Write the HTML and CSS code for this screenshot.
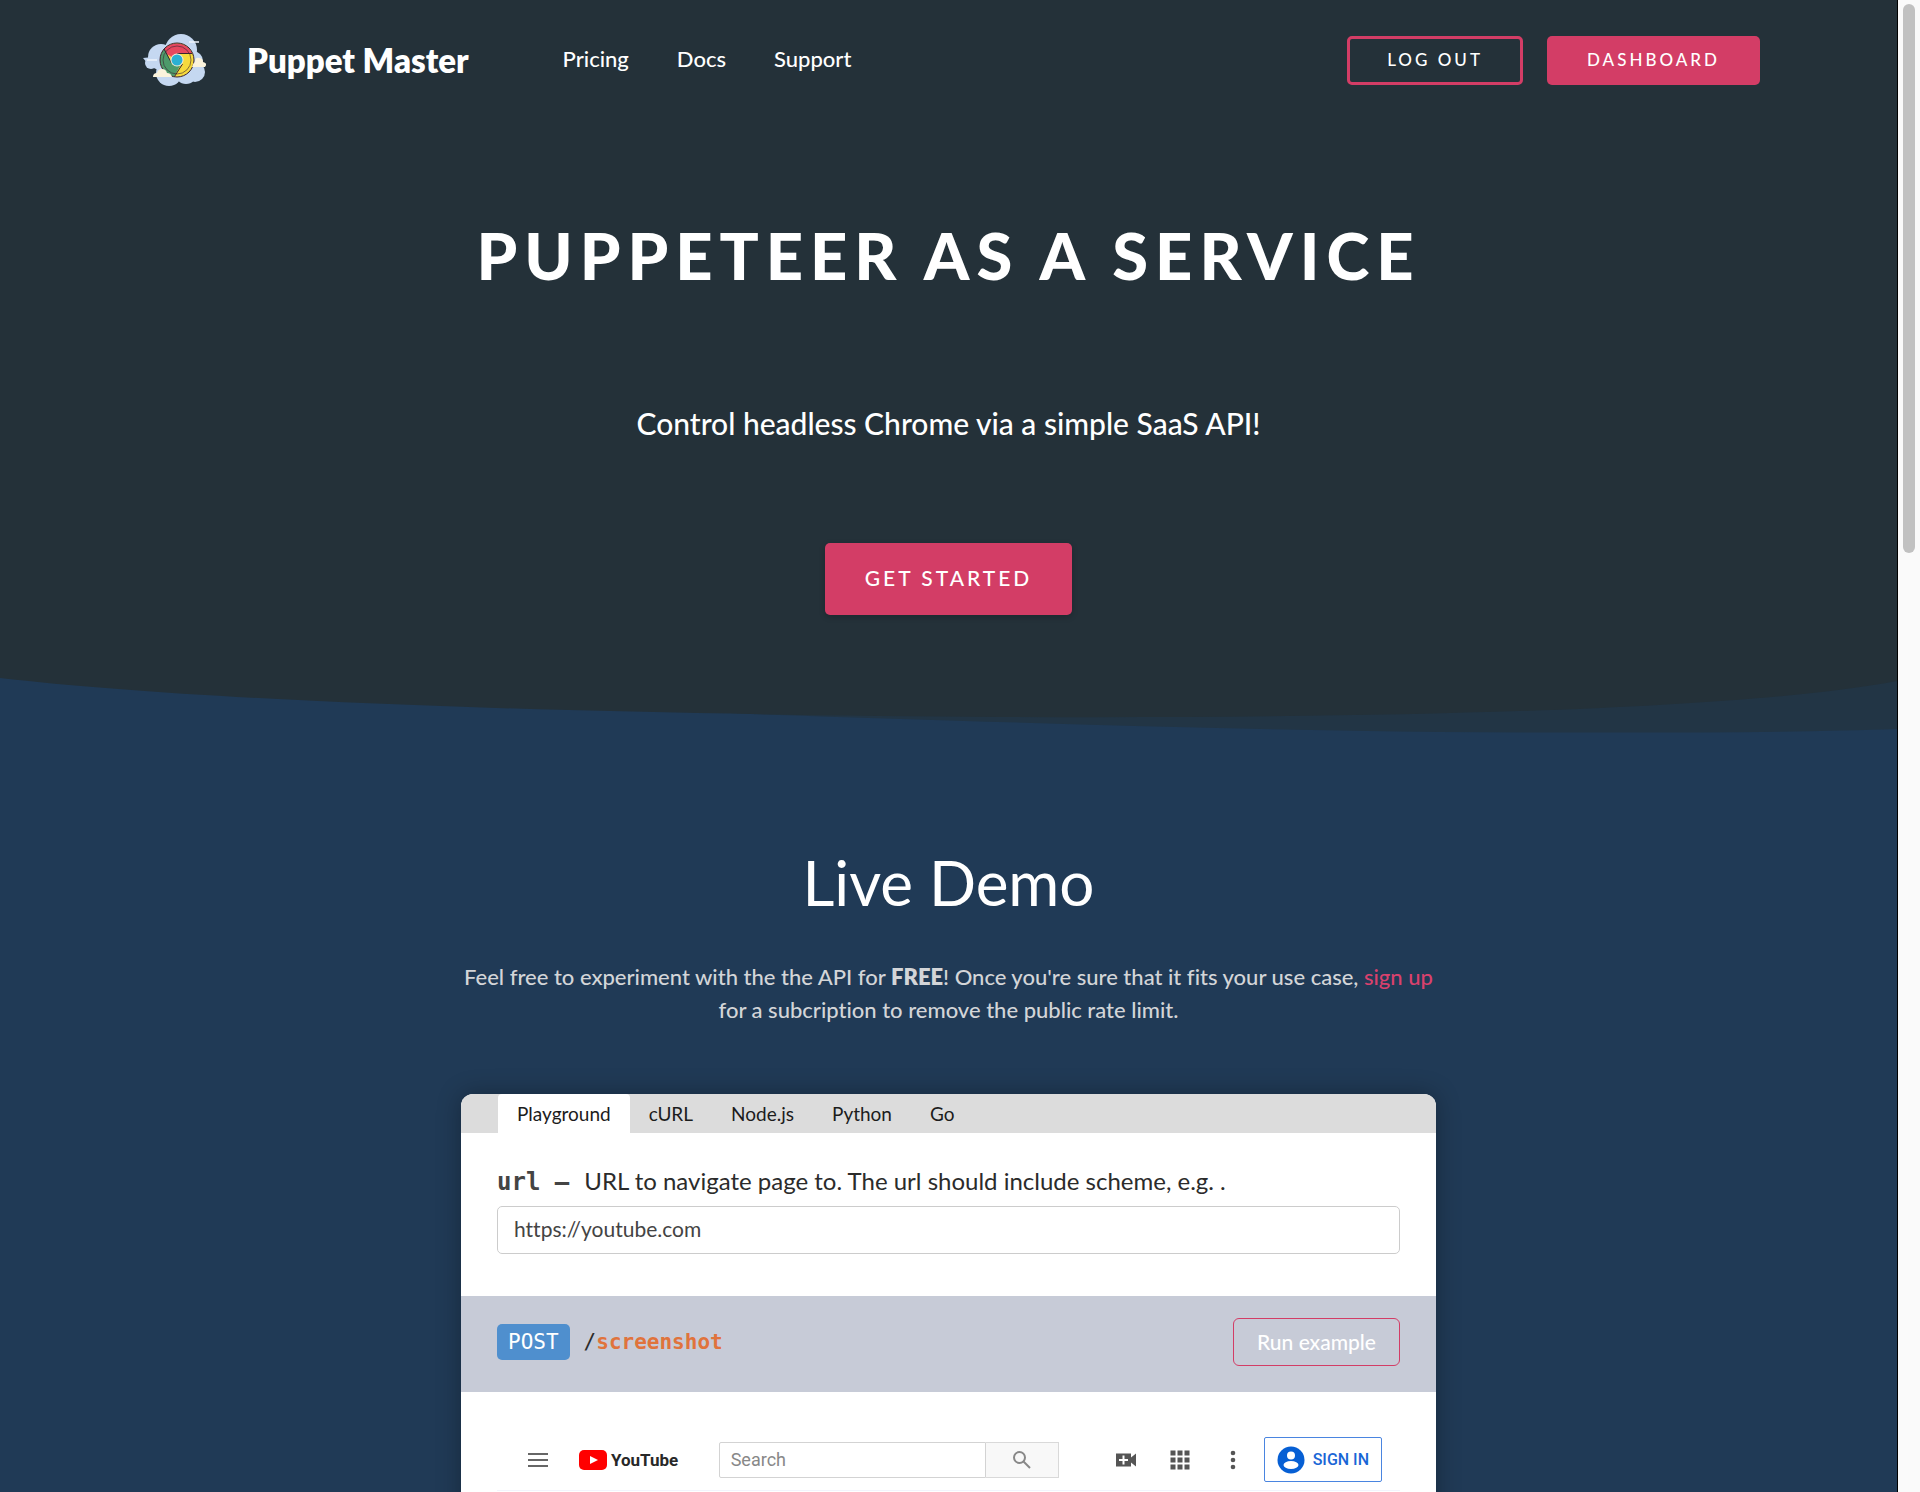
FILE: index.html
```html
<!DOCTYPE html>
<html lang="en">
<head>
<meta charset="utf-8">
<meta name="viewport" content="width=device-width, initial-scale=1">
<title>Puppet Master</title>
<link rel="stylesheet" href="styles.css">
</head>
<body>
<div class="page">
  <div class="hero">
    <header class="header">
      <a class="brand" href="#">
        <svg class="brand-logo" viewBox="0 0 76 64" aria-hidden="true">
          <g fill="#c5d8f1">
            <circle cx="44" cy="22" r="16"/><circle cx="24" cy="29" r="13"/><circle cx="56" cy="33" r="10"/>
            <circle cx="32" cy="45" r="13"/><circle cx="58" cy="44" r="10"/><circle cx="49" cy="45" r="11"/><circle cx="14" cy="35" r="6"/>
            <path d="M6 30l10-1-4 8z"/>
          </g>
          <path d="M52 14h10M10 32h10" stroke="#eef4fc" stroke-width="1.5" fill="none"/>
          <circle cx="40" cy="32" r="17" fill="#f6da3c"/>
          <path d="M40 32L25.300 23.500A17 17 0 0 1 55.500 26H40z" fill="#e6485f"/>
          <path d="M27.500 20.500A17 17 0 0 0 37 48.700L43 38 34 34z" fill="#4d9a6a"/>
          <g fill="none" stroke="#3a2430">
            <circle cx="40" cy="32" r="17"/><circle cx="40" cy="32" r="14" stroke-width=".6"/>
            <path d="M40 25.500h15M34.500 35l-7.500-14M45.500 36l-8 12.500"/>
          </g>
          <circle cx="40" cy="32" r="6.500" fill="#f4ead6"/><circle cx="40" cy="32" r="5.500" fill="#2bb0d3"/>
          <path d="M16 49q0-4 4-4 1-4 5-4 4 0 5 4 4 0 5 4zM55 39q1-4 3-5 0-5 4-4 4 0 4 4 5 1 2 5z" fill="#fbf3dc"/>
        </svg>
        <span>Puppet Master</span>
      </a>
      <nav class="nav">
        <a href="#">Pricing</a>
        <a href="#">Docs</a>
        <a href="#">Support</a>
      </nav>
      <div class="actions">
        <button class="btn btn-outline" type="button">LOG OUT</button>
        <button class="btn" type="button">DASHBOARD</button>
      </div>
    </header>
    <section class="intro">
      <h1>PUPPETEER AS A SERVICE</h1>
      <p>Control headless Chrome via a simple SaaS API!</p>
      <button class="btn btn-large" type="button">GET STARTED</button>
    </section>
    <svg class="curve" viewBox="0 0 1897 60" preserveAspectRatio="none" aria-hidden="true">
      <path d="M0 0H1897V52Q1760 57 1440 55C1200 52 1000 45 750 37L500 24z" fill="#223545"/>
      <path d="M0 0V1C200 24 560 37 1000 40C1400 42 1750 32 1897 4V0z" fill="#243139"/>
    </svg>
  </div>

  <main class="demo">
    <h2>Live Demo</h2>
    <p class="lead">Feel free to experiment with the the API for <b>FREE</b>! Once you're sure that it fits your use case, <a href="#">sign up</a><br>for a subcription to remove the public rate limit.</p>

    <section class="card">
      <div class="tabs" role="tablist">
        <button class="tab tab-active" role="tab" aria-selected="true" type="button">Playground</button>
        <button class="tab" role="tab" type="button">cURL</button>
        <button class="tab" role="tab" type="button">Node.js</button>
        <button class="tab" role="tab" type="button">Python</button>
        <button class="tab" role="tab" type="button">Go</button>
      </div>
      <div class="field">
        <label for="url"><code>url –</code><span>URL to navigate page to. The url should include scheme, e.g. .</span></label>
        <input id="url" type="text" value="https://youtube.com">
      </div>
      <div class="endpoint">
        <code class="method">POST</code>
        <code class="path">/<b>screenshot</b></code>
        <button class="run" type="button">Run example</button>
      </div>
      <div class="shot">
        <div class="yt-bar">
          <button class="icon-btn" type="button" aria-label="Menu">
            <svg width="22" height="20" viewBox="0 0 22 20"><path d="M1 4h20M1 10h20M1 16h20" stroke="#666" stroke-width="2"/></svg>
          </button>
          <a class="yt-logo" href="#">
            <svg width="28" height="22" viewBox="0 0 28 22" aria-hidden="true"><rect x="0" y="1" width="28" height="20" rx="5" fill="#f00"/><path d="M11 7l8 4-8 4z" fill="#fff"/></svg>
            <span>YouTube</span>
          </a>
          <form class="search">
            <input type="text" placeholder="Search" aria-label="Search">
            <button type="button" aria-label="Search">
              <svg width="20" height="20" viewBox="0 0 20 20" fill="none" stroke="#888" stroke-width="2"><circle cx="7.500" cy="7.500" r="5.500"/><path d="M11.500 11.500L18 18"/></svg>
            </button>
          </form>
          <div class="yt-tools">
            <button class="icon-btn" type="button" aria-label="Create">
              <svg width="22" height="20" viewBox="0 0 22 20"><path d="M1 3.500h15v4l5-4v13l-5-4v4H1z" fill="#555"/><path d="M8.500 5.500v9M4 10h9" stroke="#fff" stroke-width="2"/></svg>
            </button>
            <button class="icon-btn" type="button" aria-label="Apps">
              <svg width="20" height="20" viewBox="0 0 20 20" fill="none" stroke="#555" stroke-width="5" stroke-dasharray="5 2"><path d="M.500 3h19M.500 10h19M.500 17h19"/></svg>
            </button>
            <button class="icon-btn" type="button" aria-label="Settings">
              <svg width="20" height="20" viewBox="0 0 20 20" fill="#555"><circle cx="10" cy="3" r="2.300"/><circle cx="10" cy="10" r="2.300"/><circle cx="10" cy="17" r="2.300"/></svg>
            </button>
          </div>
          <button class="signin" type="button">
            <svg width="28" height="28" viewBox="0 0 28 28" aria-hidden="true"><circle cx="14" cy="14" r="13.500" fill="#065fd4"/><circle cx="14" cy="9.500" r="4" fill="#fff"/><ellipse cx="14" cy="19" rx="7.500" ry="4" fill="#fff"/></svg>
            <span>SIGN IN</span>
          </button>
        </div>
      </div>
    </section>
  </main>
</div>
<div class="scroll-track" aria-hidden="true"><div class="scroll-thumb"></div></div>
</body>
</html>
```
FILE: styles.css
```css
* { box-sizing: border-box; }

body {
  margin: 0;
  height: 100vh;
  display: flex;
  overflow: hidden;
  background: #203a56;
  color: #fff;
  font-family: Lato, "Open Sans", sans-serif;
  font-weight: 500;
  font-variant-ligatures: none;
}

a { color: inherit; text-decoration: none; }
button, input { font: inherit; font-variant-ligatures: none; }
button { cursor: pointer; }
svg { display: block; flex: none; }
h1, h2, p { margin: 0; }

.page { flex: 1; min-width: 0; overflow: hidden; }

.scroll-track {
  width: 23px;
  padding: 4px;
  background: #fafafa;
  border-left: 1px solid #000;
}
.scroll-thumb { width: 12px; height: 37%; margin: 0 auto; border-radius: 6px; background: #c1c1c1; }

/* Hero */
.hero { background: #203a56; }
.header {
  display: flex;
  align-items: center;
  height: 121px;
  padding: 0 137px;
  background: #243139;
}
.brand { display: flex; align-items: center; gap: 34px; padding-bottom: 2px; font-size: 33px; font-weight: 800; }
.brand-logo { width: 76px; height: 64px; }
.nav { display: flex; gap: 48px; margin-left: 94px; padding-bottom: 4px; font-size: 22px; }
.actions { display: flex; gap: 24px; margin-left: auto; }

.btn {
  height: 49px;
  padding: 0 40px 2px;
  border: 0;
  border-radius: 5px;
  background: #d33d66;
  color: #fff;
  font-size: 17px;
  letter-spacing: 3px;
  white-space: nowrap;
}
.btn-outline { padding: 0 37px 2px; border: 3px solid #d33d66; background: transparent; }
.btn-large { height: 72px; padding-bottom: 4px; font-size: 21px; box-shadow: 0 2px 6px rgba(0, 0, 0, .2); }

.intro {
  display: flex;
  flex-direction: column;
  align-items: center;
  padding: 94px 24px 62px;
  background: #243139;
  text-align: center;
}
.intro h1 { font-size: 65px; line-height: 80px; font-weight: 900; letter-spacing: 7px; }
.intro p { margin: 108px 0 100px; font-size: 30px; line-height: 40px; }
.curve { width: 100%; height: 60px; }

/* Live demo */
.demo { padding: 105px 24px 0; text-align: center; }
.demo h2 { font-size: 62px; line-height: 80px; font-weight: 400; }
.lead { margin-top: 38px; font-size: 22px; line-height: 33px; color: #d3d5d8; }
.lead b { font-weight: 800; }
.lead a { color: #d9416d; }

.card {
  max-width: 975px;
  margin: 68px auto 0;
  overflow: hidden;
  border-radius: 12px 12px 0 0;
  background: #fff;
  color: #2b2b2b;
  font-weight: 400;
  text-align: left;
  box-shadow: 0 0 24px rgba(0, 0, 0, .3);
}
.tabs { display: flex; height: 39px; padding-left: 37px; background: #dcdcdc; }
.tab { padding: 0 19px; border: 0; background: none; color: #1c1c1c; font-size: 19px; }
.tab-active { border-radius: 4px 4px 0 0; background: #fff; }

code { font-family: "DejaVu Sans Mono", monospace; }
.field { padding: 32px 36px 42px; }
.field label { display: flex; align-items: baseline; gap: 15px; font-size: 24px; line-height: 32px; }
.field label code { font-weight: 700; color: #444; }
.field input {
  display: block;
  width: 100%;
  height: 48px;
  margin-top: 8px;
  padding: 0 16px 3px;
  border: 1px solid #ccc;
  border-radius: 5px;
  color: #444;
  font-size: 21px;
}

.endpoint {
  display: flex;
  align-items: center;
  height: 96px;
  padding: 0 36px 4px;
  background: #c7cbd7;
  font-size: 21px;
}
.method { padding: 0 11px; border-radius: 5px; background: #4f8fce; color: #fff; line-height: 36px; }
.path { margin-left: 14px; }
.path b { color: #e0733c; }
.run {
  height: 48px;
  margin-left: auto;
  padding: 0 23px 2px;
  border: 1px solid #d33d66;
  border-radius: 6px;
  background: transparent;
  color: #fff;
  font-weight: 500;
}

.shot { padding: 37px 36px; font-family: Roboto, sans-serif; }
.yt-bar {
  display: flex;
  align-items: center;
  height: 62px;
  padding: 0 18px 0 30px;
  border-bottom: 1px solid #f2f4fc;
}
.icon-btn { padding: 0; border: 0; background: none; }
.yt-logo { display: flex; align-items: center; gap: 4px; margin-left: 30px; color: #282828; font-size: 17px; font-weight: 700; }
.search { display: flex; width: 340px; height: 36px; margin-left: auto; }
.search input { flex: 1; min-width: 0; padding: 0 11px; border: 1px solid #d3d3d3; border-radius: 2px 0 0 2px; font-size: 18px; }
.search input::placeholder { color: #888; }
.search button { display: grid; place-items: center; width: 73px; border: 1px solid #d9d9d9; border-left: 0; background: #f8f8f8; }
.yt-tools { display: flex; align-items: center; gap: 33px; margin: 0 21px 0 56px; }
.signin {
  display: flex;
  align-items: center;
  gap: 8px;
  height: 45px;
  padding: 0 12px;
  border: 1px solid #4a85e0;
  border-radius: 2px;
  background: #fff;
  color: #1a66d6;
  font-size: 16px;
  font-weight: 500;
  white-space: nowrap;
}
```
